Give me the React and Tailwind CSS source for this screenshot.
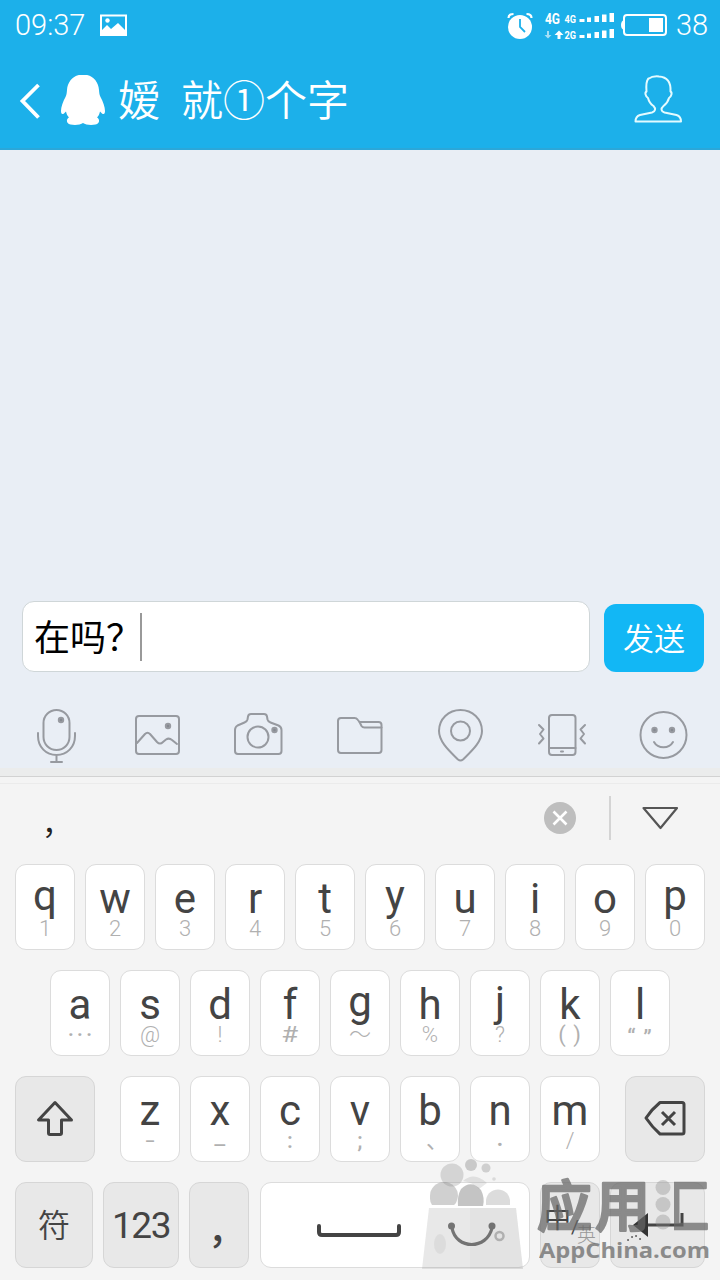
import React from "react";

const rowOne = [
  ["q", "1", true],
  ["w", "2"],
  ["e", "3"],
  ["r", "4"],
  ["t", "5"],
  ["y", "6", true],
  ["u", "7"],
  ["i", "8"],
  ["o", "9"],
  ["p", "0", true],
];

const rowTwo = [
  ["a", "···", false, "tracking-[3px] font-medium -mr-[3px]"],
  ["s", "@"],
  ["d", "!"],
  ["f", "#", false, "scale-x-125"],
  ["g", "～", true],
  ["h", "%"],
  ["j", "?", true],
  ["k", "( )", false, "tracking-[1px]"],
  ["l", "“ ”", false, "tracking-[1px] font-medium mt-[3px]"],
];

const rowThree = [
  ["z", "-", false, "scale-x-150"],
  ["x", "—", false, "mt-[5px] scale-x-75"],
  ["c", ":", false, "font-medium"],
  ["v", ";", false, "font-medium"],
  ["b", "、", false, "pl-[14px]"],
  ["n", ".", false, "font-bold -mt-[2px]"],
  ["m", "/"],
];

// letters with a descender sit a little higher on the key
const Key = ({ letter, sub, raised, subClass }) => (
  <div className="w-[60px] h-[86px] bg-white border-[1.5px] border-[#dcdcdc] rounded-[11px] flex flex-col items-center pt-[14px]">
    <span
      className={
        raised
          ? "text-[42px] leading-10 text-[#444] -mt-[3px] mb-[3px]"
          : "text-[42px] leading-10 text-[#444]"
      }
    >
      {letter}
    </span>
    <span
      className={`text-[22px] leading-5 h-5 text-[#b0b0b0] whitespace-nowrap ${subClass || "font-light"}`}
    >
      {sub}
    </span>
  </div>
);

const GrayKey = ({ className, children }) => (
  <div
    className={`h-[86px] bg-[#e8e8e8] border-[1.5px] border-[#d6d6d6] rounded-[11px] flex items-center justify-center text-[#444] ${className}`}
  >
    {children}
  </div>
);

const ToolIcon = ({ box, children }) => (
  <svg
    viewBox={box}
    className="w-[60px] h-[60px]"
    fill="none"
    stroke="#979aa0"
    strokeWidth="2"
    strokeLinecap="round"
    strokeLinejoin="round"
  >
    {children}
  </svg>
);

const StatusBar = () => (
  <div className="h-[50px] flex items-center text-white">
    <span className="w-[84px] pl-[15px] text-[29px] leading-[50px] font-light">
      09:37
    </span>
    <svg viewBox="99 13 30 25" className="w-[30px] h-[25px] ml-[15px]">
      <rect x="101" y="15.5" width="25" height="19.5" fill="none" stroke="#fff" strokeWidth="2" />
      <circle cx="107.500" cy="20.500" r="2.200" fill="#fff" />
      <path d="M102 34v-4l5-5 4 4 7-6 8 8v4H102z" fill="#fff" />
    </svg>
    <svg viewBox="500 0 174 50" className="w-[174px] h-[50px] ml-auto" fill="#fff">
      <circle cx="520" cy="27" r="12" />
      <path d="M508.500 18q0-4 5-4M531.500 18q0-4-5-4" stroke="#fff" strokeWidth="2.200" fill="none" />
      <path d="M520 19v8l5 5" stroke="#1cb0ea" strokeWidth="1.800" fill="none" />
      <text x="545" y="24" fontSize="14" fontWeight="700" textLength="15" lengthAdjust="spacingAndGlyphs">4G</text>
      <text x="564.500" y="22.500" fontSize="11" fontWeight="700" textLength="11.500" lengthAdjust="spacingAndGlyphs">4G</text>
      <text x="564.500" y="38.500" fontSize="11" fontWeight="700" textLength="11.500" lengthAdjust="spacingAndGlyphs">2G</text>
      <path d="M547 31v4h-2.500l3.500 3.500 3.500-3.500H549v-4z" opacity=".6" />
      <path d="M559 30.500l-4.500 4.500h3v4h3v-4h3z" />
      <path d="M579.500 19h5v3h-5zM587 17.500h4v4.500h-4zM594.500 16h4.500v6h-4.500zM602 14.500h4.500v7.500H602zM609.500 13h4.500v9h-4.500z" />
      <path d="M579.500 35h5v3h-5zM587 33.500h4v4.500h-4zM594.500 32h4.500v6h-4.500zM602 30.500h4.500v7.500H602zM609.500 29h4.500v9h-4.500z" />
      <rect x="624" y="15" width="42" height="20" rx="3" fill="none" stroke="#fff" strokeWidth="2" />
      <path d="M624 20q-3 1-3 5t3 5z" />
      <rect x="649" y="18" width="14" height="14" />
    </svg>
    <span className="w-[46px] pl-[2px] text-[29px] leading-[50px] font-light">
      38
    </span>
  </div>
);

const ChatHeader = () => (
  <div className="h-[100px] flex items-center text-white border-b-2 border-[#2ba7d9]">
    <svg viewBox="15 75 95 54" className="w-[95px] h-[54px] ml-[15px] mt-[6px] shrink-0">
      <path d="M38.500 85L22.500 101l16 16.500" fill="none" stroke="#fff" strokeWidth="3.800" />
      <path
        d="M83 74.500c-9 0-15.500 6.500-16 15.500-.2 3-.5 5-1.500 7-2.500 4.500-4.500 10-4.500 14 0 4 2 4 5 .5.500 2.500 1.500 4.500 3 6-3 1.500-3 6 1.500 7 4 1 10 .5 12.500-1.500 2.500 2 8.500 2.500 12.500 1.500 4.500-1 4.500-5.500 1.500-7 1.500-1.500 2.500-3.500 3-6 3 3.500 5 3.500 5-.5 0-4-2-9.500-4.500-14-1-2-1.300-4-1.500-7-.5-9-7-15.500-16-15.500z"
        fill="#fff"
      />
    </svg>
    <h1 className="ml-2 mt-[6px] text-[42px] leading-[60px] font-[350] whitespace-pre">
      嫒<span className="inline-block w-[21px]"> </span>就①个字
    </h1>
    <svg
      viewBox="630 70 56 58"
      className="w-14 h-[58px] ml-auto mr-[34px]"
      fill="none"
      stroke="#e4fbff"
      strokeWidth="2"
      strokeLinejoin="round"
    >
      <path d="M648 79c3-2 7-3 11-2.500 8 .5 12 6 11.500 15 2 1 1 5-1.500 6.500-1 4-3 6-5.500 8-3 2.500-2.500 5.500 1 6.500l12 2.500c3 1 4.500 3 4.500 6.500h-45.500c0-3.500 1.500-5.500 4.500-6.500l12-2.500c3.500-1 4-4 1.500-6.500-3-2-4.500-4-5.500-8-2.500-1.500-3.500-5.500-1.500-6.500-.5-6 0-11 2-13z" />
    </svg>
  </div>
);

const Toolbar = () => (
  <div className="h-[60px] mt-[33px] pl-[26px] flex gap-[41px]">
    <ToolIcon box="26 705 60 60">
      <rect x="43.500" y="710" width="26" height="40" rx="13" />
      <path d="M38 733v3c0 11 8 19 18.500 19S75 747 75 736v-3M56.500 755v7M51 762h11" />
      <circle cx="61" cy="720" r="2.200" fill="#858990" />
    </ToolIcon>
    <ToolIcon box="127 705 60 60">
      <rect x="136" y="716" width="43" height="38" rx="3" />
      <path d="M137 743l8-9q2.500-2.500 5 0l7 8q3 3 6 0l3-2.500q3-2 6 .5l5 4" />
      <circle cx="168" cy="726" r="2.200" fill="#858990" />
    </ToolIcon>
    <ToolIcon box="228 705 60 60">
      <path d="M238 754q-3 0-3-3v-21q0-3 2.500-4.500l7-3q2.500-1 3-3l.5-3q.5-2.500 3-2.500h13q2.500 0 3 2.500l.5 3q.5 2 3 3l8 3q3 1.500 3 4.500v21q0 3-3 3z" />
      <circle cx="258" cy="737" r="10.500" />
      <circle cx="274.500" cy="730" r="2.200" fill="#858990" />
    </ToolIcon>
    <ToolIcon box="329 705 60 60">
      <path d="M341 753q-3 0-3-3v-29q0-3 3-3h13.500q2 0 3 1.500l2 2.500h19q3 0 3 3v25q0 3-3 3z" />
      <path d="M359.500 722l2 4q1 1.500 3 1.500h17" />
    </ToolIcon>
    <ToolIcon box="430 705 60 60">
      <path d="M460.500 710c-12 0-21.500 9-21.500 21 0 11 11 20.500 19 28.500q2.500 2 5 0c8-8 19-17.500 19-28.500 0-12-9.500-21-21.500-21z" />
      <circle cx="460.500" cy="731" r="9.500" />
    </ToolIcon>
    <ToolIcon box="531 705 60 60">
      <rect x="549" y="715" width="26.500" height="40" rx="3" />
      <path d="M549 748h26.500M561 751.500h2" />
      <path d="M539 725l4.500 4.500-3.500 4.500 3.500 4.500-4.500 5M585 725l-4.500 4.500 3.500 4.500-3.500 4.500 4.500 5" />
    </ToolIcon>
    <ToolIcon box="632 705 60 60">
      <circle cx="663.500" cy="735" r="23" />
      <path d="M654 742c4 7 15 7 19 0" />
      <circle cx="654.500" cy="730" r="2.200" fill="#858990" />
      <circle cx="672" cy="730" r="2.200" fill="#858990" />
    </ToolIcon>
  </div>
);

const CandidateBar = () => (
  <div className="h-[81px] border-t border-[#ebebeb] flex items-center">
    <span className="pl-[42px] text-[30px] leading-[60px] text-[#222]">，</span>
    <svg viewBox="543 801 34 34" className="w-[34px] h-[34px] ml-auto mb-[13px]">
      <circle cx="560" cy="818" r="16" fill="#bebebe" />
      <path d="M553.500 811.500l13 13M566.500 811.500l-13 13" stroke="#fff" strokeWidth="2.600" />
    </svg>
    <div className="w-[2px] h-11 bg-[#d4d4d4] ml-8 mb-[13px]"></div>
    <svg viewBox="640 800 42 36" className="w-[42px] h-9 ml-[29px] mr-[38px] mb-[13px]">
      <path d="M643.500 808h33.500L660.500 828z" fill="none" stroke="#555" strokeWidth="2.200" strokeLinejoin="round" />
    </svg>
  </div>
);

const Watermark = () => (
  <svg viewBox="410 1150 310 130" className="absolute right-0 bottom-0 w-[310px] h-[130px]">
    <g fill="#8a8a8a">
      <circle cx="452" cy="1175" r="11.500" opacity=".3" />
      <circle cx="471" cy="1165" r="6" opacity=".4" />
      <circle cx="486" cy="1168" r="4.500" opacity=".35" />
      <circle cx="494" cy="1179" r="1.800" opacity=".25" />
      <path d="M463 1181q11-10 24 2l-8 6q-7-7-16-8z" opacity=".2" />
      <path d="M430 1199v-3a14 14 0 0 1 28 0q-1 7-4 9h-22q-2-3-2-6z" opacity=".4" />
      <path d="M458 1206q-1-10 3-17 10-10 20 1 4 8 2 16z" opacity=".5" />
      <path d="M486 1205v-5c2-14 22-14 24 0v5z" opacity=".3" />
      <path d="M429 1208h87l7 61H422z" opacity=".2" />
      <path d="M470 1208h46l7 61H470z" opacity=".05" />
      <ellipse cx="440" cy="1244" rx="6" ry="10" opacity=".12" />
    </g>
    <g opacity=".58">
      <circle cx="451.500" cy="1226" r="3.500" fill="#222" />
      <circle cx="492" cy="1226" r="3.500" fill="#222" />
      <path d="M452 1228c4 22 35 22 40 0" fill="none" stroke="#222" strokeWidth="3.200" />
    </g>
    <circle cx="499.500" cy="1236" r="4" fill="none" stroke="#b0b0b0" strokeWidth="2.500" />
    <g fill="#8a8a8a" opacity=".35">
      <circle cx="663" cy="1187.500" r="7.500" />
      <circle cx="663" cy="1204.500" r="7.500" />
      <circle cx="663" cy="1222" r="7.500" />
    </g>
    <defs>
      {/* hides the water strokes, the three drops above stand in for them */}
      <linearGradient id="hui" x1="652" x2="712" y1="0" y2="0" gradientUnits="userSpaceOnUse">
        <stop offset=".37" stopColor="#666" stopOpacity="0" />
        <stop offset=".37" stopColor="#666" />
      </linearGradient>
    </defs>
    <g
      fontFamily="'Noto Sans CJK SC', sans-serif"
      fontWeight="500"
      fontSize="55"
      opacity=".72"
      strokeWidth="2.500"
      strokeLinejoin="round"
    >
      <text x="537" y="1226" fill="#666" stroke="#666">应</text>
      <text x="595" y="1226" fill="#666" stroke="#666">用</text>
      <text x="654" y="1226" fill="url(#hui)" stroke="url(#hui)">汇</text>
    </g>
    <text
      x="539"
      y="1258"
      fontFamily="'Open Sans', sans-serif"
      fontWeight="700"
      fontSize="22"
      fill="#666"
      opacity=".72"
      textLength="171"
      lengthAdjust="spacingAndGlyphs"
    >
      AppChina.com
    </text>
  </svg>
);

const Keyboard = () => (
  <div className="relative h-[504px] bg-[#f4f4f4] border-t border-[#d2d2d2] pt-[6px]">
    <CandidateBar />
    <div className="flex flex-col gap-5">
      <div className="flex justify-center gap-[10px]">
        {rowOne.map(([letter, sub, raised]) => (
          <Key key={letter} letter={letter} sub={sub} raised={raised} />
        ))}
      </div>
      <div className="flex justify-center gap-[10px]">
        {rowTwo.map(([letter, sub, raised, subClass]) => (
          <Key key={letter} letter={letter} sub={sub} raised={raised} subClass={subClass} />
        ))}
      </div>
      <div className="flex justify-between px-[15px]">
        <GrayKey className="w-[80px]">
          <svg viewBox="35 1098 40 42" className="w-10 h-[42px]">
            <path
              d="M55 1102.500l-16.500 17.500h10v13q0 1.500 1.500 1.500h10q1.500 0 1.500-1.500v-13h10z"
              fill="none"
              stroke="#444"
              strokeWidth="3"
              strokeLinejoin="round"
            />
          </svg>
        </GrayKey>
        <div className="flex gap-[10px]">
          {rowThree.map(([letter, sub, raised, subClass]) => (
            <Key key={letter} letter={letter} sub={sub} raised={raised} subClass={subClass} />
          ))}
        </div>
        <GrayKey className="w-[80px]">
          <svg
            viewBox="643 1098 44 42"
            className="w-11 h-[42px]"
            fill="none"
            stroke="#444"
            strokeWidth="3"
            strokeLinejoin="round"
          >
            <path d="M660 1102.500h22q2 0 2 2v27.500q0 2-2 2h-22q-8-7-14-16 6-9 14-15.500z" />
            <path d="M662 1112l13 13M675 1112l-13 13" />
          </svg>
        </GrayKey>
      </div>
      <div className="flex px-[15px]">
        <GrayKey className="w-[78px] text-[32px] font-[350]">
          <span className="pt-[2px]">符</span>
        </GrayKey>
        <GrayKey className="w-[76px] ml-[10px] text-[37px]">
          <span className="tracking-[-1.5px] pt-[2px]">123</span>
        </GrayKey>
        <GrayKey className="w-[60px] ml-[10px] text-[37px] font-medium">
          <span className="pl-[15px] pt-[14px]">，</span>
        </GrayKey>
        <div className="w-[270px] h-[86px] ml-[11px] bg-white border-[1.5px] border-[#dcdcdc] rounded-[11px] pl-[54px] pt-[40px]">
          <svg viewBox="315 1223 88 16" className="w-[88px] h-4">
            <path d="M319 1226v6q0 3 3 3h74q3 0 3-3v-6" fill="none" stroke="#444" strokeWidth="4" strokeLinecap="round" />
          </svg>
        </div>
        <GrayKey className="w-[60px] ml-[10px]">
          <span className="text-[27px] leading-[30px] font-normal mb-[12px]">中</span>
          <span className="text-[19px] leading-5 font-normal mt-1">/</span>
          <span className="text-[19px] leading-5 font-light text-[#999] mt-[22px] -ml-[2px]">英</span>
        </GrayKey>
        <GrayKey className="w-[95px] ml-[10px]">
          <svg viewBox="625 1205 64 40" className="w-16 h-10">
            <path d="M632 1225l15-12v24z" fill="#333" />
            <path d="M647 1225h34v-12" fill="none" stroke="#444" strokeWidth="3" />
            <path d="M627 1240h.1M631 1237h.1M635 1236h.1M639 1239h.1" stroke="#666" strokeWidth="2" strokeLinecap="round" />
          </svg>
        </GrayKey>
      </div>
    </div>
    <Watermark />
  </div>
);

const App = () => {
  return (
    <main className="w-[720px] h-[1280px] overflow-hidden bg-[#e9eef5] font-[Roboto,'Noto_Sans_CJK_SC',sans-serif]">
      <header className="h-[150px] bg-[#1cb0ea]">
        <StatusBar />
        <ChatHeader />
      </header>

      <section className="h-[451px]"></section>

      <div className="h-[71px] flex pl-[22px] pr-4 justify-between">
        <div className="w-[568px] h-[71px] bg-white border border-[#cfd6d8] rounded-[12px] flex items-center pl-[11px]">
          <span className="text-[36px] leading-[60px] text-black pt-[5px]">在吗？</span>
          <span className="w-[2px] h-12 bg-[#999] -ml-[2px]"></span>
        </div>
        <button className="w-[100px] h-[68px] mt-[3px] pt-[5px] rounded-[12px] bg-[#12b7f5] text-white text-[31px] font-[350]">
          发送
        </button>
      </div>

      <Toolbar />
      <div className="h-[8px] mt-[3px] bg-[#ebecec]"></div>
      <Keyboard />
    </main>
  );
};

export default App;
